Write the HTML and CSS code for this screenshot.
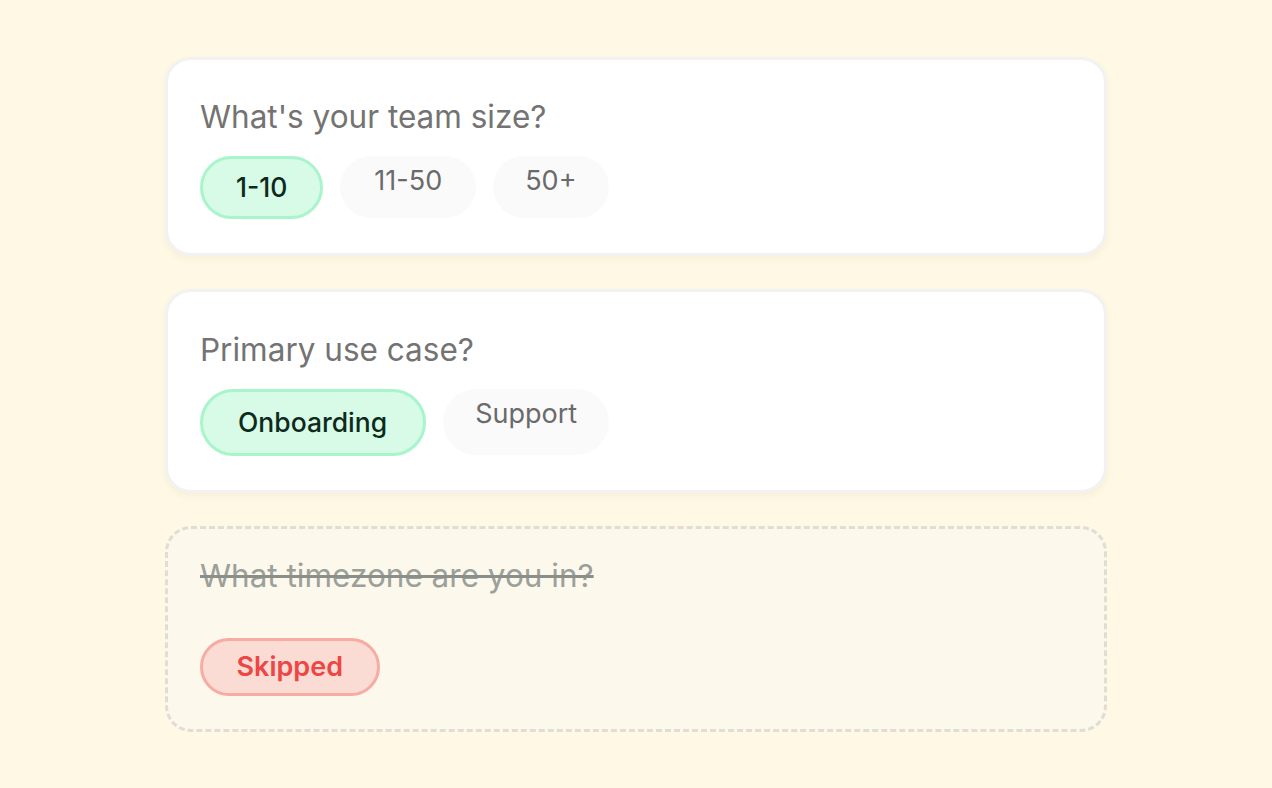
FILE: index.html
```html
<!DOCTYPE html>
<html lang="en">
<head>
<meta charset="utf-8">
<title>Survey</title>
<link rel="stylesheet" href="styles.css">
</head>
<body>
<main class="stack">
  <section class="card">
    <h2 class="question">What's your team size?</h2>
    <div class="options">
      <span class="pill pill--selected">1-10</span>
      <span class="pill">11-50</span>
      <span class="pill pill--narrow">50+</span>
    </div>
  </section>
  <section class="card card--tall">
    <h2 class="question">Primary use case?</h2>
    <div class="options">
      <span class="pill pill--selected">Onboarding</span>
      <span class="pill">Support</span>
    </div>
  </section>
  <section class="card card--skipped">
    <h2 class="question question--skipped">What timezone are you in?</h2>
    <div class="options options--skipped">
      <span class="pill pill--skipped">Skipped</span>
    </div>
  </section>
</main>
</body>
</html>
```
FILE: styles.css
```css
* { box-sizing: border-box; }
html, body { margin: 0; padding: 0; }
body {
  background: #fef8e4;
  font-family: Inter, "Noto Sans", sans-serif;
  min-height: 788px;
}
.stack {
  width: 942px;
  margin: 57px auto 0;
  display: flex;
  flex-direction: column;
  gap: 33px;
}
.card {
  background: #ffffff;
  border: 3px solid #f2f2f2;
  border-radius: 26px;
  padding: 33px 32px 34px;
  box-shadow: 0 3px 6px rgba(150, 120, 40, 0.07);
}
.card--tall { padding-top: 34px; }
.question {
  margin: 0;
  font-size: 31.5px;
  line-height: 48px;
  font-weight: 400;
  color: #737373;
}
.options {
  display: flex;
  gap: 17px;
  margin-top: 15px;
  align-items: flex-start;
}
.pill {
  display: inline-block;
  font-size: 27px;
  line-height: 42px;
  padding: 4px 34px 16px;
  border-radius: 999px;
  background: #fafafa;
  color: #6a6a6a;
}
.pill--narrow { padding-left: 32px; padding-right: 32px; }
.pill--selected {
  font-size: 26.5px;
  padding: 7px 33px 8px;
  border: 3px solid #a9f5cb;
  background: #d7fbe6;
  color: #0d2a1c;
  font-weight: 500;
}
.card--tall .pill { padding: 4px 32px 20px; }
.card--tall .pill--selected { padding: 9px 36px 10px 35px; }
.card--skipped {
  background: #fcf8ec;
  border: 3px dashed #e0ddd2;
  box-shadow: none;
  padding: 23px 32px 33px;
}
.question--skipped {
  color: #9ba09b;
  text-decoration: line-through;
  text-decoration-color: #8a8f8a;
  text-decoration-thickness: 3px;
}
.options--skipped { margin-top: 38px; }
.pill--skipped {
  padding: 8px 33.5px;
  line-height: 36px;
  border: 3px solid #f7aba2;
  background: #fadcd4;
  color: #ee4545;
  font-weight: 600;
}
```
